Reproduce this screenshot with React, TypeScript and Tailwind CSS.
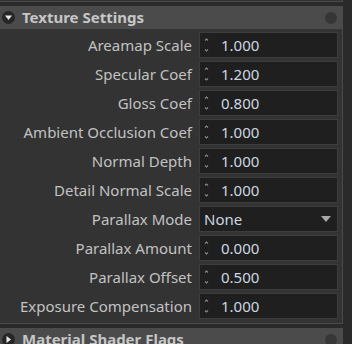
import React from "react";

const rows: { label: string; value: string; kind?: "select" }[] = [
  { label: "Areamap Scale", value: "1.000" },
  { label: "Specular Coef", value: "1.200" },
  { label: "Gloss Coef", value: "0.800" },
  { label: "Ambient Occlusion Coef", value: "1.000" },
  { label: "Normal Depth", value: "1.000" },
  { label: "Detail Normal Scale", value: "1.000" },
  { label: "Parallax Mode", value: "None", kind: "select" },
  { label: "Parallax Amount", value: "0.000" },
  { label: "Parallax Offset", value: "0.500" },
  { label: "Exposure Compensation", value: "1.000" },
];

function Spinner() {
  return (
    <svg width="7" height="18" viewBox="0 0 7 18" className="shrink-0">
      <path d="M2 4.5 L3.5 3 L5 4.5" stroke="#8a8a8a" strokeWidth="1.1" fill="none" />
      <path d="M2 13.5 L3.5 15 L5 13.5" stroke="#8a8a8a" strokeWidth="1.1" fill="none" />
    </svg>
  );
}

function Header({ title, open }: { title: string; open: boolean }) {
  return (
    <div className="h-[23px] bg-[#4b4b4b] flex items-center border-r border-[#4b4b4b]">
      <div className="ml-[2px] w-[13px] h-[13px] rounded-full bg-[#262626] flex items-center justify-center">
        {open ? (
          <svg width="9" height="9" viewBox="0 0 9 9">
            <path d="M1 2.5 L8 2.5 L4.5 7 Z" fill="#e8e8e8" />
          </svg>
        ) : (
          <svg width="9" height="9" viewBox="0 0 9 9">
            <path d="M2.5 1 L7 4.5 L2.5 8 Z" fill="#e8e8e8" />
          </svg>
        )}
      </div>
      <span className="ml-[7px] text-[15px] font-bold text-[#c6c6c6] leading-none">{title}</span>
      <div className="ml-auto mr-[5px] w-[12px] h-[12px] rounded-full bg-[#363636]" />
    </div>
  );
}

export default function App() {
  return (
    <div
      className="w-[352px] h-[344px] bg-[#2a2a2a] overflow-hidden"
      style={{ fontFamily: '"Noto Sans", "Open Sans", sans-serif' }}
    >
      <div className="w-[343px]">
        <div className="h-[2px] bg-[#333333] border-b border-r border-[#4a4a4a]" />
        <div className="h-[4px]" />
        <Header title="Texture Settings" open />
        <div className="bg-[#333333] border-r border-b border-[#4a4a4a] pt-[3px] pb-[4px] flex flex-col gap-[3px]">
          {rows.map((r) => (
            <div key={r.label} className="flex items-center h-[26px]">
              <div className="w-[192px] text-right text-[15px] text-[#c2c2c2] whitespace-nowrap">
                {r.label}
              </div>
              <div className="ml-[7px] w-[139px] h-[26px] bg-[#1f1f1f] border border-[#3d3d3d] flex items-center">
                {r.kind === "select" ? (
                  <>
                    <span className="ml-[4px] text-[15px] text-[#cdd6e0]">{r.value}</span>
                    <svg width="10" height="6" viewBox="0 0 10 6" className="ml-auto mr-[6px]">
                      <path d="M0 0 L10 0 L5 6 Z" fill="#a8a8a8" />
                    </svg>
                  </>
                ) : (
                  <>
                    <div className="ml-[3px]">
                      <Spinner />
                    </div>
                    <span className="ml-[11px] text-[15px] text-[#cdd6e0]">{r.value}</span>
                  </>
                )}
              </div>
            </div>
          ))}
        </div>
        <div className="h-[4px]" />
        <Header title="Material Shader Flags" open={false} />
      </div>
    </div>
  );
}
